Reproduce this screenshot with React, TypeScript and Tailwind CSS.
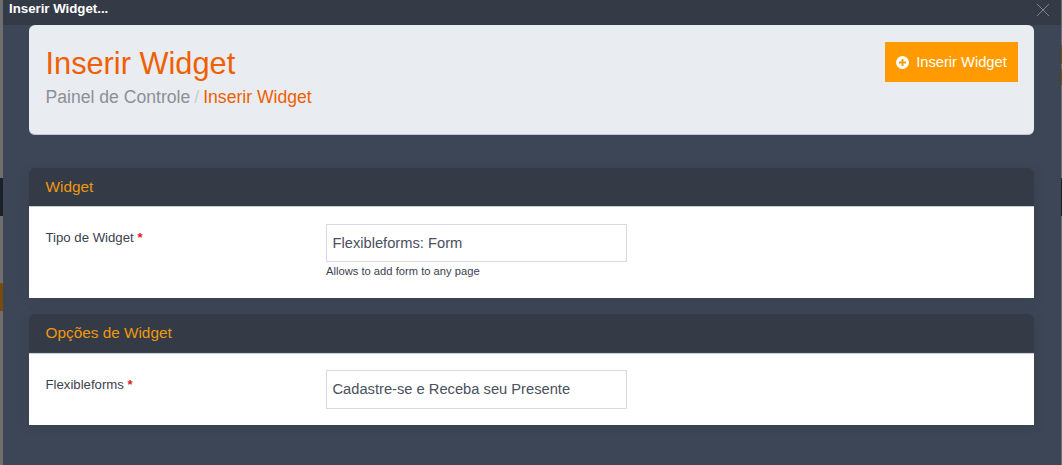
const Star = () => <span className="text-[#e02222] font-bold"> *</span>;

function Panel({ title, label, value, help, bodyClass, labelClass, inputClass }: { title: string; label: string; value: string; help?: string; bodyClass: string; labelClass: string; inputClass: string }) {
  return (
    <section className="shadow-[0_2px_12px_rgba(0,0,0,0.08)]">
      <h3 className="h-[38px] rounded-t-[6px] bg-[#343a46] pl-[16.5px] text-[15.35px] leading-[38px] text-[#ee980f]">{title}</h3>
      <div className={`flex border-t border-[#c8ccd4] bg-white pl-[16.5px] ${bodyClass}`}>
        <label className={`w-[280.5px] text-[13.2px] leading-[20px] text-[#3a4250] ${labelClass}`}>{label}<Star /></label>
        <div>
          <div className={`w-[301px] border border-[#d9dbe3] pl-[5.5px] text-[14.7px] text-[#4a505d] ${inputClass}`}>{value}</div>
          {help && <p className="mt-[1px] text-[11.2px] leading-[16px] text-[#3a4250]">{help}</p>}
        </div>
      </div>
    </section>
  );
}

export default function App() {
  return (
    <div className="flex h-[465px] w-[1062px] overflow-hidden bg-[#6f6f6f] font-['Liberation_Sans',sans-serif]">
      <div className="flex h-full w-[3px] shrink-0 flex-col bg-[#6f6f6f]">
        <div className="mt-[178px] h-[38px] bg-[#1c2028]" />
        <div className="mt-[67px] h-[28px] bg-[#7a4a0a]" />
      </div>
      <main className="flex h-full w-[1058px] flex-col bg-[#3d4656]">
        <header className="flex h-[25px] items-start justify-between bg-[#343a46] pl-[6px] pr-[11px]">
          <span className="text-[13.25px] font-bold leading-[17px] text-white">Inserir Widget...</span>
          <svg width="14" height="14" viewBox="0 0 14 14" className="mt-[3px] text-[#7d838d]" fill="none" stroke="currentColor" strokeWidth="1"><path d="M1 1 13 13M13 1 1 13" /></svg>
        </header>
        <div className="flex flex-col pl-[26px] pr-[27px]">
          <div className="flex h-[110px] justify-between rounded-[6px] border-b border-[#c4c7cd] bg-[#e9ecf1] pb-0 pl-[16.5px] pr-[16px] pt-[17px]">
            <div>
              <h1 className="pt-[1px] text-[30.75px] leading-[42px] text-[#f05f00]">Inserir Widget</h1>
              <p className="text-[17.6px] leading-[24px] text-[#8d9097]">Painel de Controle<span className="px-[4px] text-[#c9ccd1]">/</span><span className="text-[#f05f00]">Inserir Widget</span></p>
            </div>
            <button className="flex h-[40px] w-[133px] items-center justify-center gap-[7px] pt-[1px] text-[14.7px] text-white bg-[#ff9b00]">
              <svg width="13" height="13" viewBox="0 0 13 13" className="mb-[1px]"><circle cx="6.5" cy="6.5" r="6.5" fill="white" /><path d="M6.5 3v7M3 6.5h7" stroke="#ff9b00" strokeWidth="2" /></svg>
              Inserir Widget
            </button>
          </div>
          <div className="mt-[33px] flex flex-col gap-[16px]">
            <Panel title="Widget" label="Tipo de Widget" value="Flexibleforms: Form" help="Allows to add form to any page" bodyClass="h-[92px] pt-[17px]" labelClass="pt-[4px]" inputClass="h-[38px] leading-[36px]" />
            <Panel title="Opções de Widget" label="Flexibleforms" value="Cadastre-se e Receba seu Presente" bodyClass="mt-[1px] h-[72px] pt-[16px]" labelClass="pt-[5px]" inputClass="h-[39px] leading-[37px]" />
          </div>
        </div>
      </main>
      <div className="flex h-full w-[1px] shrink-0 flex-col bg-[#6f6f6f]">
        <div className="mt-[45px] h-[19px] bg-[#7a4a0a]" />
        <div className="mt-[5px] h-[16px] bg-[#7a4a0a]" />
        <div className="mt-[93px] h-[38px] bg-[#1c2028]" />
      </div>
    </div>
  );
}
